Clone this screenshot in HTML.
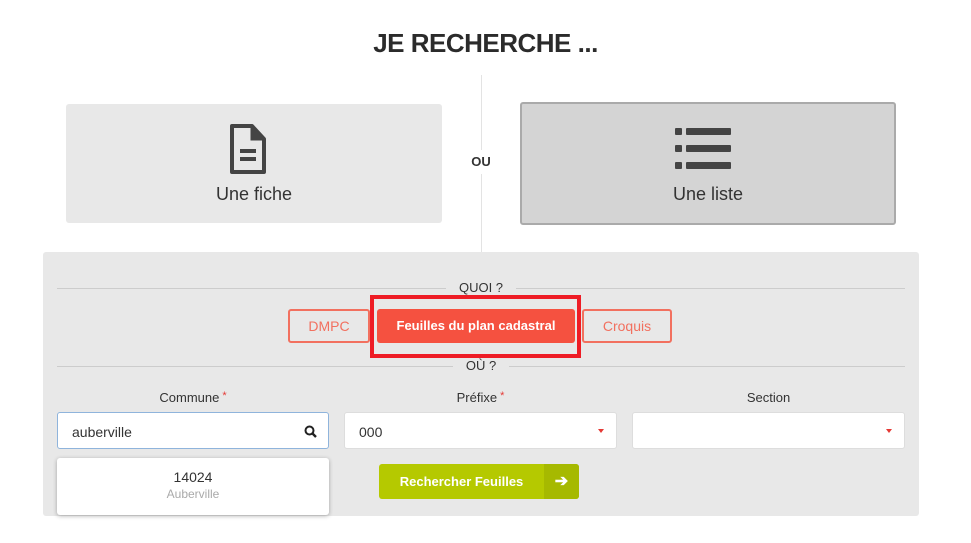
<!DOCTYPE html>
<html><head><meta charset="utf-8"><style>
*{box-sizing:border-box;margin:0;padding:0}
body{width:971px;height:543px;background:#fff;font-family:"Liberation Sans",sans-serif;color:#333;position:relative;overflow:hidden}
.a{position:absolute}
.t{left:0;width:971px;top:28px;text-align:center;font-size:26px;font-weight:bold;color:#2b2b2b;letter-spacing:-0.5px}
.card{border-radius:3px;text-align:center;font-size:18px;color:#333}
.lbl{font-size:13px;text-align:center;color:#333}
.star{color:#e53935;font-size:11px;vertical-align:top;margin-left:3px}
.inp{background:#fff;border:1px solid #ddd;border-radius:3px;height:37px;font-size:14px;padding:11px 14px}
.caret{position:absolute;right:12px;top:16px;width:0;height:0;border-left:3px solid transparent;border-right:3px solid transparent;border-top:4px solid #e53935}
.btn{font-size:14px;text-align:center;border-radius:3px;line-height:30px}
</style></head><body>
<div class="a t">JE RECHERCHE ...</div>
<div class="a" style="left:481px;top:75px;width:1px;height:177px;background:#e3e3e3"></div>
<div class="a" style="left:466px;top:150px;width:30px;height:24px;background:#fff;text-align:center;font-size:13px;font-weight:bold;line-height:24px">OU</div>
<div class="a card" style="left:66px;top:104px;width:376px;height:119px;background:#e8e8e8">
<svg class="a" style="left:161px;top:18px" width="44" height="56" viewBox="0 0 44 56"><path d="M5 4h20l12 13v33H5z" fill="none" stroke="#444" stroke-width="4" stroke-linejoin="round"/><path d="M25 4v13h12" fill="#444" stroke="#444" stroke-width="3"/><rect x="13" y="27" width="16" height="4" fill="#444"/><rect x="13" y="35" width="16" height="4" fill="#444"/></svg>
<div class="a" style="left:0;width:100%;top:80px">Une fiche</div></div>
<div class="a card" style="left:520px;top:102px;width:376px;height:123px;background:#d4d4d4;border:2px solid #aaa">
<svg class="a" style="left:153px;top:24px" width="56" height="44" viewBox="0 0 56 44"><rect x="0" y="0" width="7" height="7" rx="1" fill="#444"/><rect x="11" y="0" width="45" height="7" rx="1" fill="#444"/><rect x="0" y="17" width="7" height="7" rx="1" fill="#444"/><rect x="11" y="17" width="45" height="7" rx="1" fill="#444"/><rect x="0" y="34" width="7" height="7" rx="1" fill="#444"/><rect x="11" y="34" width="45" height="7" rx="1" fill="#444"/></svg>
<div class="a" style="left:0;width:100%;top:80px">Une liste</div></div>
<div class="a" style="left:43px;top:252px;width:876px;height:264px;background:#e8e8e8;border-radius:3px"></div>
<div class="a" style="left:57px;top:288px;width:848px;height:1px;background:#ccc"></div>
<div class="a" style="left:446px;top:279px;width:70px;text-align:center;background:#e8e8e8;font-size:13px;line-height:17px">QUOI ?</div>
<div class="a" style="left:57px;top:366px;width:848px;height:1px;background:#ccc"></div>
<div class="a" style="left:453px;top:357px;width:56px;text-align:center;background:#e8e8e8;font-size:13px;line-height:17px">OÙ ?</div>
<div class="a btn" style="left:288px;top:309px;width:82px;height:34px;border:2px solid #f2705f;color:#f2705f;background:#fff0;">DMPC</div>
<div class="a btn" style="left:377px;top:309px;width:198px;height:34px;background:#f55140;color:#fff;font-weight:bold;line-height:34px;font-size:13px">Feuilles du plan cadastral</div>
<div class="a" style="left:370px;top:295px;width:211px;height:63px;border:4px solid #ee1c25"></div>
<div class="a btn" style="left:582px;top:309px;width:90px;height:34px;border:2px solid #f2705f;color:#f2705f">Croquis</div>
<div class="a lbl" style="left:57px;top:390px;width:272px">Commune<span class="star">*</span></div>
<div class="a lbl" style="left:344px;top:390px;width:273px">Préfixe<span class="star">*</span></div>
<div class="a lbl" style="left:632px;top:390px;width:273px">Section</div>
<div class="a inp" style="left:57px;top:412px;width:272px;border-color:#8fb4dc">auberville
<svg class="a" style="right:11px;top:12px" width="13" height="13" viewBox="0 0 13 13"><circle cx="5.5" cy="5.5" r="4" fill="none" stroke="#222" stroke-width="2"/><path d="M8.5 8.5l3.5 3.5" stroke="#222" stroke-width="2.4"/></svg></div>
<div class="a inp" style="left:344px;top:412px;width:273px">000<div class="caret"></div></div>
<div class="a inp" style="left:632px;top:412px;width:273px"><div class="caret"></div></div>
<div class="a" style="left:57px;top:458px;width:272px;height:57px;background:#fff;border-radius:3px;box-shadow:0 1px 4px rgba(0,0,0,.3);text-align:center">
<div style="font-size:14px;margin-top:11px">14024</div><div style="font-size:12px;color:#aaa;margin-top:2px">Auberville</div></div>
<div class="a" style="left:379px;top:464px;width:200px;height:35px;background:#b5c900;border-radius:3px;color:#fff;font-weight:bold;font-size:13px;line-height:35px">
<span style="display:inline-block;width:165px;text-align:center">Rechercher Feuilles</span>
<div class="a" style="left:165px;top:0;width:35px;height:35px;background:#a6b900;border-radius:0 3px 3px 0;text-align:center;font-size:16px">➔</div></div>
</body></html>
